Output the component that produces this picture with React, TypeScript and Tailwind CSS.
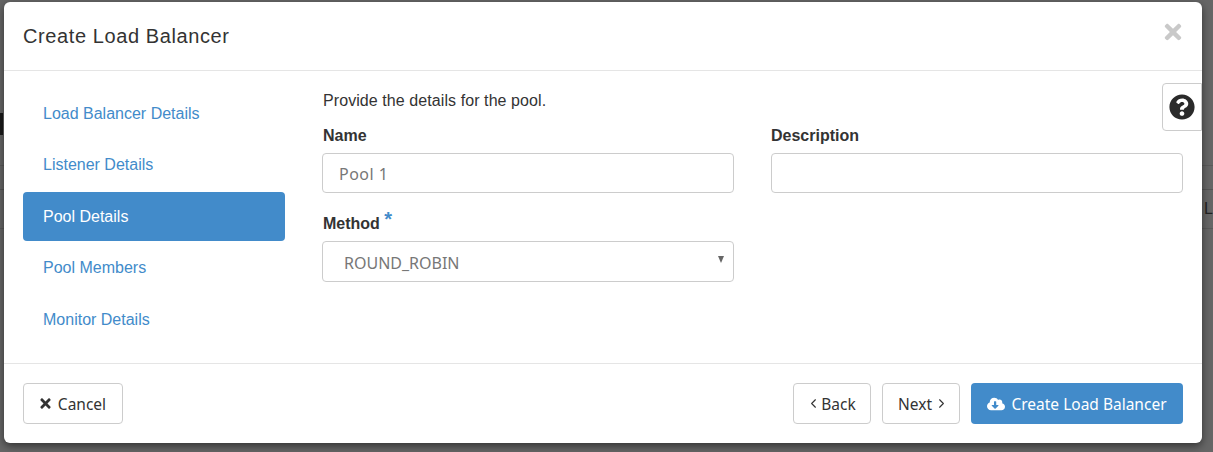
import { ChevronLeft, ChevronRight } from 'lucide-react';
import { FaCloudDownloadAlt, FaQuestionCircle, FaTimes } from 'react-icons/fa';

const steps = ['Load Balancer Details', 'Listener Details', 'Pool Details', 'Pool Members', 'Monitor Details'];

const btn =
  "flex h-[41px] items-center justify-center rounded-[4px] border border-[#ccc] bg-white pt-[2px] font-['Noto_Sans',sans-serif] text-[15.5px] text-[#333]";

export default function App() {
  return (
    <div className="relative h-[452px] w-[1213px] overflow-hidden bg-[#666] pt-[2px] pl-[4px] font-['Liberation_Sans',Arial,sans-serif] text-[#333]">
      {/* page behind the backdrop */}
      <div className="absolute top-[113px] left-0 h-[22px] w-[3px] bg-[#1a1a1a]" />
      <div className="absolute top-[165px] left-0 h-px w-[1213px] bg-[#5a5a5a]" />
      <div className="absolute top-[189px] left-0 h-px w-[1213px] bg-[#555]" />
      <div className="absolute top-[228px] left-0 h-px w-[1213px] bg-[#5a5a5a]" />
      <span className="absolute top-[200px] left-[1204px] text-[16px] leading-[18px] text-[#222]">L</span>

      <div className="relative flex h-[441px] w-[1198px] flex-col rounded-[6px] bg-white shadow-[0_3px_9px_rgba(0,0,0,0.5)]">
        <div className="flex h-[69px] shrink-0 items-center justify-between border-b border-[#e5e5e5] pr-[17px] pl-[19px]">
          <h4 className="text-[20px] leading-[22px] tracking-[0.03em]">Create Load Balancer</h4>
          <FaTimes className="mb-[8px] size-[24px] text-[#c9c9c9]" />
        </div>

        <div className="relative flex h-[292px] shrink-0 pl-[19px]">
          <ul className="flex w-[262px] shrink-0 flex-col gap-[2.5px] pt-[18.4px]">
            {steps.map((step) => (
              <li
                key={step}
                className={
                  step === 'Pool Details'
                    ? 'flex h-[49px] items-center rounded-[4px] bg-[#428bca] px-[20px] text-[16px] text-white'
                    : 'flex h-[49px] items-center rounded-[4px] px-[20px] text-[16px] text-[#428bca]'
                }
              >
                {step}
              </li>
            ))}
          </ul>

          <div className="ml-[37px] w-[861px] pt-[20px]">
            <p className="pl-px text-[16px] leading-[20px] tracking-[0.005em]">Provide the details for the pool.</p>
            <div className="mt-[14px] grid grid-cols-[412px_412px] gap-x-[37px]">
              <div>
                <label className="block pl-px text-[16px] leading-[22px] font-bold">Name</label>
                <div className="mt-[6px] flex h-[40px] items-center rounded-[4px] border border-[#ccc] px-[16px] pt-[2px] font-['Noto_Sans',sans-serif] text-[16px] tracking-[0.03em] text-[#777]">
                  Pool 1
                </div>
              </div>
              <div>
                <label className="block text-[16px] leading-[22px] font-bold">Description</label>
                <div className="mt-[6px] h-[40px] rounded-[4px] border border-[#ccc]" />
              </div>
              <div className="mt-[20px]">
                <label className="block pl-px text-[16px] leading-[22px] font-bold">
                  Method <span className="relative -top-[3px] text-[20px] leading-[16px] font-bold text-[#428bca]">*</span>
                </label>
                <div className="mt-[6px] flex h-[41px] items-center justify-between rounded-[4px] border border-[#ccc] pt-[2px] pr-[9px] pl-[21px] font-['Noto_Sans',sans-serif] text-[16px] text-[#777]">
                  ROUND_ROBIN
                  <span className="mb-[6px] h-0 w-0 border-x-[3.5px] border-t-[7px] border-x-transparent border-t-[#666]" />
                </div>
              </div>
            </div>
          </div>

          <div className="absolute top-[12px] right-0 flex h-[48px] w-[40px] items-center justify-center rounded-l-[4px] border border-[#ccc] bg-white">
            <FaQuestionCircle className="size-[26px] text-[#2a2a2a]" />
          </div>
        </div>

        <div className="flex flex-1 items-start justify-between border-t border-[#e5e5e5] pt-[19px] pr-[19px] pl-[19px]">
          <div className={`${btn} w-[100px] gap-[5px] pr-[2px]`}>
            <FaTimes className="mb-[2px] size-[15px]" />
            Cancel
          </div>
          <div className="flex gap-[11px]">
            <div className={`${btn} w-[78px] pr-[2px]`}>
              <ChevronLeft className="mb-[2px] size-[15px]" strokeWidth={1.8} />
              Back
            </div>
            <div className={`${btn} w-[78px] !justify-start gap-[2px] pl-[15px]`}>
              Next
              <ChevronRight className="mb-[2px] size-[15px]" strokeWidth={1.8} />
            </div>
            <div className="flex h-[41px] w-[212px] items-center justify-center gap-[6px] rounded-[4px] bg-[#428bca] pt-[2px] font-['Noto_Sans',sans-serif] text-[15.5px] text-white">
              <FaCloudDownloadAlt className="mb-[2px] size-[18px]" />
              Create Load Balancer
            </div>
          </div>
        </div>
      </div>
    </div>
  );
}
